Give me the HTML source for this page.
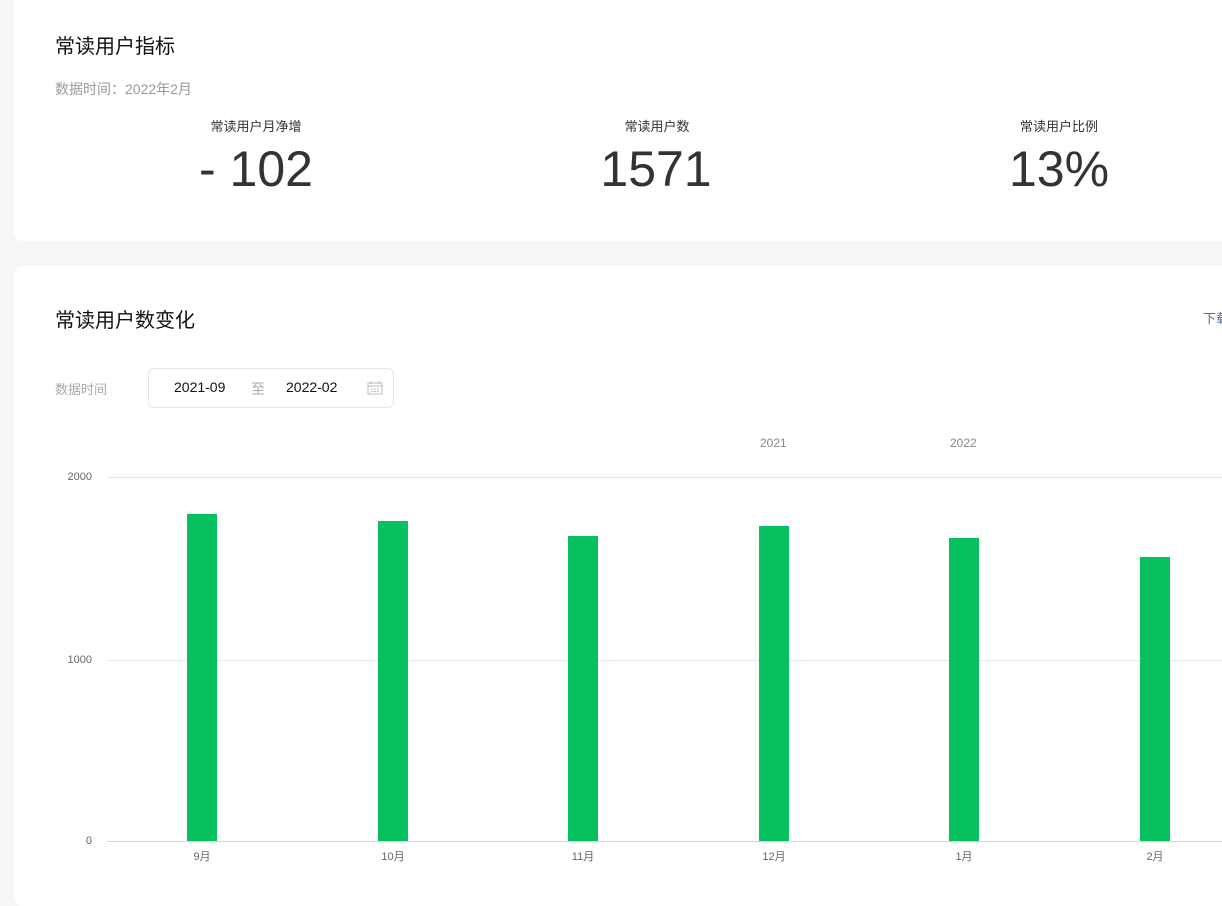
<!DOCTYPE html>
<html><head><meta charset="utf-8"><style>
body{margin:0;width:1222px;height:879px;background:#f5f6f7;font-family:"Liberation Sans","Noto Sans CJK SC",sans-serif;overflow:hidden;position:relative}
.card{position:absolute;left:14px;width:1230px;background:#fff;border-radius:8px}
.a{position:absolute;white-space:nowrap}
.num{font-size:50px;color:#333;transform:translateX(-50%);top:139px;line-height:60px}
.lab{font-size:13px;color:#333;transform:translateX(-50%);top:116px}
.grid{position:absolute;left:107px;width:1115px;height:1px;background:#e6e6e6}
.bar{position:absolute;width:30px;background:#07c160;bottom:38px}
.xl{position:absolute;top:848px;font-size:11px;color:#666;transform:translateX(-50%)}
.yl{position:absolute;right:1130px;font-size:11px;color:#666}
</style></head><body>
<div class="card" style="top:-10px;height:251px"></div>
<div class="card" style="top:266px;height:640px"></div>
<div class="a" style="left:55px;top:30px;font-size:20px;color:#111">常读用户指标</div>
<div class="a" style="left:55px;top:79px;font-size:14px;color:#999">数据时间：2022年2月</div>
<div class="a lab" style="left:256px">常读用户月净增</div>
<div class="a num" style="left:256px">- 102</div>
<div class="a lab" style="left:657px">常读用户数</div>
<div class="a num" style="left:656px">1571</div>
<div class="a lab" style="left:1059px">常读用户比例</div>
<div class="a num" style="left:1059px">13%</div>

<div class="a" style="left:55px;top:304px;font-size:20px;color:#111">常读用户数变化</div>
<div class="a" style="left:1203px;top:308px;font-size:13px;color:#576b95">下载</div>
<div class="a" style="left:55px;top:379px;font-size:13px;color:#aaa">数据时间</div>
<div class="a" style="left:148px;top:368px;width:244px;height:38px;border:1px solid #e5e5e5;border-radius:6px"></div>
<div class="a" style="left:174px;top:379px;font-size:14px;color:#111">2021-09</div>
<div class="a" style="left:251px;top:379px;font-size:14px;color:#aaa">至</div>
<div class="a" style="left:286px;top:379px;font-size:14px;color:#111">2022-02</div>
<svg class="a" style="left:367px;top:381px" width="16" height="14" viewBox="0 0 16 14"><rect x="1" y="2" width="14" height="11" fill="none" stroke="#bbb"/><path d="M1 5h14M4 8h2M7 8h2M10 8h2M4 10.5h2M7 10.5h2M10 10.5h2M4 0v3M12 0v3" stroke="#bbb"/></svg>

<div class="a" style="left:760px;top:436px;font-size:12px;color:#888">2021</div>
<div class="a" style="left:950px;top:436px;font-size:12px;color:#888">2022</div>
<div class="grid" style="top:477px"></div>
<div class="grid" style="top:660px"></div>
<div class="grid" style="top:841px;background:#ccd6eb"></div>
<div class="yl" style="top:471px">2000</div>
<div class="yl" style="top:654px">1000</div>
<div class="yl" style="top:835px">0</div>
<div class="bar" style="left:187px;height:327px"></div>
<div class="bar" style="left:378px;height:320px"></div>
<div class="bar" style="left:568px;height:305px"></div>
<div class="bar" style="left:759px;height:315px"></div>
<div class="bar" style="left:949px;height:303px"></div>
<div class="bar" style="left:1140px;height:284px"></div>
<div class="xl" style="left:202px">9月</div>
<div class="xl" style="left:393px">10月</div>
<div class="xl" style="left:583px">11月</div>
<div class="xl" style="left:774px">12月</div>
<div class="xl" style="left:964px">1月</div>
<div class="xl" style="left:1155px">2月</div>
</body></html>
